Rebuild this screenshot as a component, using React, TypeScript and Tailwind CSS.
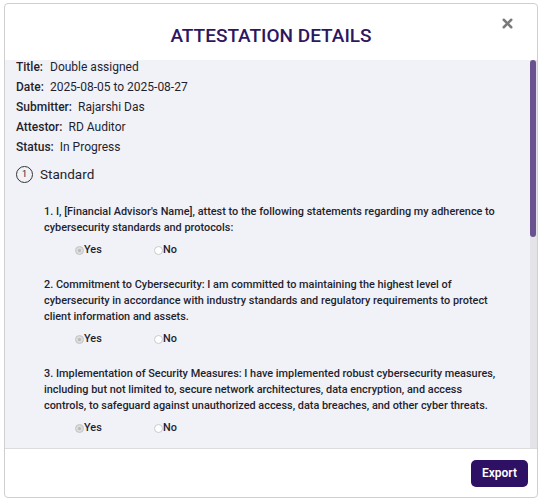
import { X } from "lucide-react";

type Question = {
  id: number;
  text: string;
};

const questions: Question[] = [
  {
    id: 1,
    text: "I, [Financial Advisor's Name], attest to the following statements regarding my adherence to cybersecurity standards and protocols:",
  },
  {
    id: 2,
    text: "Commitment to Cybersecurity: I am committed to maintaining the highest level of cybersecurity in accordance with industry standards and regulatory requirements to protect client information and assets.",
  },
  {
    id: 3,
    text: "Implementation of Security Measures: I have implemented robust cybersecurity measures, including but not limited to, secure network architectures, data encryption, and access controls, to safeguard against unauthorized access, data breaches, and other cyber threats.",
  },
  {
    id: 4,
    text: "Regular Risk Assessments: I conduct regular risk assessments to identify vulnerabilities and potential threats to client data, and take appropriate steps to mitigate them.",
  },
];

const info = [
  { label: "Title:", value: "Double assigned", extra: true },
  { label: "Date:", value: "2025-08-05 to 2025-08-27" },
  { label: "Submitter:", value: "Rajarshi Das" },
  { label: "Attestor:", value: "RD Auditor" },
  { label: "Status:", value: "In Progress" },
];

function Radio({ checked }: { checked: boolean }) {
  return (
    <span
      className={`relative inline-block w-[9px] h-[9px] rounded-full border ${
        checked ? "border-[#c4c4c4] bg-[#dcdcdc]" : "border-[#cacaca] bg-white"
      }`}
    >
      {checked && (
        <span className="absolute inset-[2px] rounded-full bg-[#b8b8b8]" />
      )}
    </span>
  );
}

export default function App() {
  return (
    <div
      className="w-[542px] h-[502px] bg-white pl-[4px] pt-[3px]"
      style={{ fontFamily: "Roboto, 'Liberation Sans', sans-serif" }}
    >
      <div className="w-[534px] h-[495px] border border-[#cfcfcf] rounded-[4px] flex flex-col bg-white">
        {/* HEADER */}
        <div className="h-[56px] relative flex items-center justify-center shrink-0">
          <h2 className="text-[19px] font-medium text-[#2e1760] mt-[8px]">
            ATTESTATION DETAILS
          </h2>
          <button className="absolute right-[22px] top-[12px] text-[#7a7a7a]">
            <X className="w-[15px] h-[15px]" strokeWidth={4} />
          </button>
        </div>

        {/* BODY */}
        <div className="flex-1 flex bg-[#f1f2f8] min-h-0">
          <div className="flex-1 overflow-hidden pl-[11px] pr-[26px] text-[#1f1f2e]">
            <div className="flex flex-col gap-[6px] text-[12px]">
              {info.map((r) => (
                <div key={r.label} className="leading-[14px] flex gap-[6px]">
                  <span className="font-medium">{r.label}</span>
                  <span className={r.extra ? "ml-[1px]" : ""}>{r.value}</span>
                </div>
              ))}
            </div>

            <div className="flex items-center gap-[7px] mt-[10px] h-[20px]">
              <span className="w-[17px] h-[17px] rounded-full border border-[#333] flex items-center justify-center text-[9px] leading-none">
                1
              </span>
              <span className="text-[13.5px]">Standard</span>
            </div>

            <div className="pl-[28px] mt-[20px] flex flex-col gap-[20px] text-[10.9px]">
              {questions.map((q) => (
                <div key={q.id}>
                  <p className="leading-[16px] font-medium">
                    {q.id}. {q.text}
                  </p>
                  <div className="flex items-center h-[14px] mt-[7px] pl-[31px] font-medium">
                    <label className="flex items-center w-[79px]">
                      <Radio checked />
                      <span>Yes</span>
                    </label>
                    <label className="flex items-center">
                      <Radio checked={false} />
                      <span>No</span>
                    </label>
                  </div>
                </div>
              ))}
            </div>
          </div>

          {/* scrollbar */}
          <div className="w-[7px] shrink-0 flex flex-col bg-[#e4e4e8]">
            <div className="h-[177px] w-[6px] rounded-full bg-[#6a5290]" />
          </div>
        </div>

        {/* FOOTER */}
        <div className="h-[49px] border-t border-[#dcdcdc] flex items-center justify-end pr-[9px] shrink-0">
          <button className="h-[27px] px-[11px] rounded-[5px] bg-[#2e1065] text-white text-[12px] font-semibold">
            Export
          </button>
        </div>
      </div>
    </div>
  );
}
